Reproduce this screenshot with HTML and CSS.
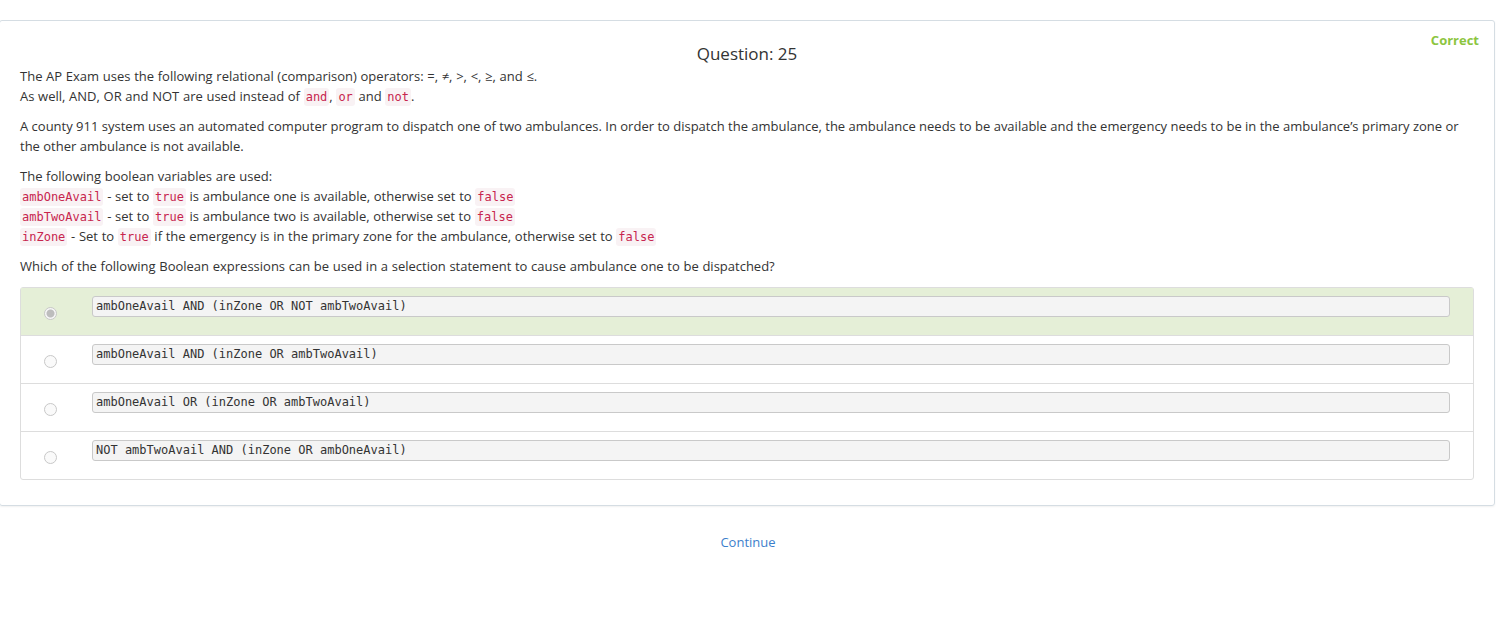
FILE: index.html
```html
<!DOCTYPE html>
<html>
<head>
<meta charset="utf-8">
<link rel="stylesheet" href="styles.css">
</head>
<body>
<div class="page">
  <div class="card">
    <div class="status">Correct</div>
    <h1 class="title">Question: 25</h1>
    <p>The AP Exam uses the following relational (comparison) operators: =, ≠, &gt;, &lt;, ≥, and ≤.<br>As well, AND, OR and NOT are used instead of <code>and</code>, <code>or</code> and <code>not</code>.</p>
    <p>A county 911 system uses an automated computer program to dispatch one of two ambulances. In order to dispatch the ambulance, the ambulance needs to be available and the emergency needs to be in the ambulance’s primary zone or the other ambulance is not available.</p>
    <p>The following boolean variables are used:<br>
    <code>ambOneAvail</code> - set to <code>true</code> is ambulance one is available, otherwise set to <code>false</code><br>
    <code>ambTwoAvail</code> - set to <code>true</code> is ambulance two is available, otherwise set to <code>false</code><br>
    <code>inZone</code> - Set to <code>true</code> if the emergency is in the primary zone for the ambulance, otherwise set to <code>false</code></p>
    <p>Which of the following Boolean expressions can be used in a selection statement to cause ambulance one to be dispatched?</p>
    <div class="options">
      <div class="option correct">
        <span class="radio checked"></span>
        <pre class="expr">ambOneAvail AND (inZone OR NOT ambTwoAvail)</pre>
      </div>
      <div class="option">
        <span class="radio"></span>
        <pre class="expr">ambOneAvail AND (inZone OR ambTwoAvail)</pre>
      </div>
      <div class="option">
        <span class="radio"></span>
        <pre class="expr">ambOneAvail OR (inZone OR ambTwoAvail)</pre>
      </div>
      <div class="option">
        <span class="radio"></span>
        <pre class="expr">NOT ambTwoAvail AND (inZone OR ambOneAvail)</pre>
      </div>
    </div>
  </div>
  <div class="footer"><a class="continue" href="#">Continue</a></div>
</div>
</body>
</html>
```
FILE: styles.css
```css
html, body {
  margin: 0;
  padding: 0;
  background: #fff;
}
body {
  font-family: "Open Sans", Lato, sans-serif;
  font-size: 13px;
  line-height: 20px;
  color: #333;
}
.page {
  padding-top: 20px;
}
.card {
  position: relative;
  margin: 0 1px 0 -1px;
  border: 1px solid #d5dde3;
  border-radius: 3px;
  box-shadow: 0 1px 2px rgba(0,0,0,0.06);
  padding: 11px 20px 25px 20px;
}
.status {
  position: absolute;
  top: 9px;
  right: 15px;
  color: #8cc540;
  font-weight: bold;
  font-size: 13px;
}
.title {
  margin: 11px 0 1px;
  text-align: center;
  font-weight: normal;
  font-size: 17px;
  line-height: 22px;
  color: #333;
}
p {
  margin: 0 0 10px;
  word-spacing: 0.3px;
}
.card p:nth-of-type(2) {
  word-spacing: 0;
}
code {
  font-family: "DejaVu Sans Mono", monospace;
  font-size: 12px;
  line-height: 14px;
  word-spacing: 0;
  color: #c7254e;
  background: #f9f2f4;
  padding: 2px 2px;
  border-radius: 3px;
}
.options {
  margin-top: 11px;
  border: 1px solid #ddd;
  border-radius: 3px;
}
.option {
  display: flex;
  align-items: flex-start;
  height: 47px;
  border-top: 1px solid #ddd;
  box-sizing: content-box;
}
.option:first-child {
  border-top: none;
}
.option.correct {
  background: #e5efd7;
}
.radio {
  flex: none;
  width: 11px;
  height: 11px;
  margin: 19px 36px 0 23px;
  border: 1px solid #c8c8c8;
  border-radius: 50%;
  background: #fafafa;
  box-sizing: content-box;
}
.radio.checked {
  background: radial-gradient(circle, #bdbdbd 0 3.5px, #f6f6f6 4.5px);
}
.expr {
  flex: 1;
  margin: 8px 23px 0 -1px;
  height: 19px;
  padding: 0 3px;
  font-family: "DejaVu Sans Mono", monospace;
  font-size: 12px;
  line-height: 19px;
  color: #333;
  background: #f4f4f4;
  border: 1px solid #c9c9c9;
  border-radius: 3px;
}
.footer {
  text-align: center;
  padding-top: 26px;
}
.continue {
  color: #3d7fcc;
  text-decoration: none;
  font-size: 13px;
}
```
